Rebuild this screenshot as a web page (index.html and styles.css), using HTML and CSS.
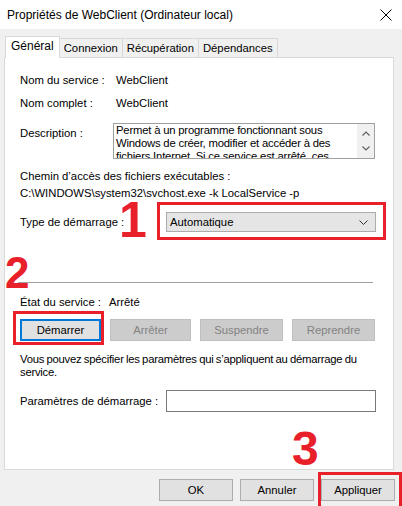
FILE: index.html
```html
<!DOCTYPE html>
<html lang="fr">
<head>
    <meta charset="UTF-8">
    <meta name="viewport" content="width=device-width, initial-scale=1.0">
    <title>Propriétés de WebClient</title>
    <link rel="stylesheet" href="styles.css">
</head>
<body>
    <div class="titlebar">
        <span class="title">Propriétés de WebClient (Ordinateur local)</span>
        <svg class="close" width="12" height="12" viewBox="0 0 12 12">
            <path d="M0.5 0.5 L11.5 11.5 M11.5 0.5 L0.5 11.5" stroke="#000" stroke-width="1"/>
        </svg>
    </div>

    <div class="tabs">
        <div class="tab active">Général</div>
        <div class="tab">Connexion</div>
        <div class="tab">Récupération</div>
        <div class="tab">Dépendances</div>
    </div>

    <div class="panel">
        <div class="row first">
            <span class="label">Nom du service :</span>
            <span>WebClient</span>
        </div>
        <div class="row second">
            <span class="label">Nom complet :</span>
            <span>WebClient</span>
        </div>
        <div class="row desc-row">
            <span class="label desc-label">Description :</span>
            <div class="textarea">
                <div class="desc-text">Permet à un programme fonctionnant sous Windows de créer, modifier et accéder à des fichiers Internet. Si ce service est arrêté, ces</div>
                <div class="scrollbar">
                    <svg width="8" height="5" viewBox="0 0 8 5"><path d="M0.5 4.5 L4 1 L7.5 4.5" fill="none" stroke="#606060" stroke-width="1.2"/></svg>
                    <svg width="8" height="5" viewBox="0 0 8 5"><path d="M0.5 0.5 L4 4 L7.5 0.5" fill="none" stroke="#606060" stroke-width="1.2"/></svg>
                </div>
            </div>
        </div>
        <div class="path-block">
            <div>Chemin d’accès des fichiers exécutables :</div>
            <div>C:\WINDOWS\system32\svchost.exe -k LocalService -p</div>
        </div>
        <div class="row startup-row">
            <span class="label wide">Type de démarrage :</span>
            <div class="select">
                <span>Automatique</span>
                <svg width="9" height="5" viewBox="0 0 9 5"><path d="M0.5 0.5 L4.5 4.5 L8.5 0.5" fill="none" stroke="#333" stroke-width="1"/></svg>
            </div>
        </div>

        <div class="separator"></div>

        <div class="row state-row">
            <span class="label">État du service :</span>
            <span>Arrêté</span>
        </div>
        <div class="service-buttons">
            <button class="btn focused">Démarrer</button>
            <button class="btn" disabled>Arrêter</button>
            <button class="btn" disabled>Suspendre</button>
            <button class="btn" disabled>Reprendre</button>
        </div>
        <p class="hint">Vous pouvez spécifier les paramètres qui s’appliquent au démarrage du service.</p>
        <div class="row params-row">
            <span class="label wide">Paramètres de démarrage :</span>
            <div class="input"></div>
        </div>
    </div>

    <div class="footer">
        <button class="btn">OK</button>
        <button class="btn">Annuler</button>
        <button class="btn">Appliquer</button>
    </div>

    <!-- red annotations drawn over the dialog -->
    <div class="mark box-1"></div>
    <div class="mark box-2"></div>
    <div class="mark box-3"></div>
    <span class="num num-1">1</span>
    <span class="num num-2">2</span>
    <span class="num num-3">3</span>
</body>
</html>
```

FILE: styles.css
```css
body {
    margin: 0;
    width: 402px;
    height: 506px;
    overflow: hidden;
    position: relative;
    background-color: #f0f0f0;
    font-family: "Liberation Sans", Arial, sans-serif;
    font-size: 11.3px;
    color: #000;
}

.titlebar {
    height: 29px;
    background-color: #fff;
    display: flex;
    align-items: center;
    justify-content: space-between;
    padding: 0 10px 0 7px;
}

.title {
    font-size: 12px;
}

.tabs {
    display: flex;
    align-items: flex-end;
    height: 28px;
    padding-left: 5px;
}

.tab {
    height: 18px;
    line-height: 19px;
    padding: 0 4px;
    border: 1px solid #d9d9d9;
    border-bottom: none;
    margin-left: -1px;
    background-color: #f0f0f0;
}

.tab:first-child {
    margin-left: 0;
}

.tab.active {
    height: 21px;
    line-height: 18px;
    background-color: #fff;
    position: relative;
    z-index: 1;
    margin-bottom: -1px;
    padding: 0 5px;
    font-size: 12px;
}

.panel {
    box-sizing: border-box;
    margin-left: 4px;
    width: 390px;
    height: 413px;
    background-color: #fff;
    border: 1px solid #d9d9d9;
    padding: 0 16px 0 15px;
}

.row {
    display: flex;
    align-items: center;
    height: 16px;
    white-space: nowrap;
}

.label {
    width: 96px;
    flex-shrink: 0;
}

.label.wide {
    width: 146px;
}

.first { margin-top: 14px; }
.second { margin-top: 7px; }

.desc-row {
    margin-top: 12px;
    height: 36px;
    align-items: flex-start;
}

.desc-label {
    width: 93px;
    padding-top: 4px;
}

.textarea {
    box-sizing: border-box;
    width: 262px;
    height: 36px;
    border: 1px solid #a0a0a0;
    display: flex;
    overflow: hidden;
    white-space: normal;
}

.desc-text {
    flex: 1;
    padding: 0 2px;
    line-height: 13px;
    height: 34px;
    overflow: hidden;
    letter-spacing: -0.2px;
}

.scrollbar {
    width: 17px;
    background-color: #f0f0f0;
    display: flex;
    flex-direction: column;
    align-items: center;
    justify-content: space-around;
    padding: 2px 0;
}

.path-block {
    margin-top: 9px;
    line-height: 17px;
}

.startup-row {
    margin-top: 10px;
    height: 20px;
}

.select {
    box-sizing: border-box;
    width: 210px;
    height: 20px;
    background-color: #e5e5e5;
    border: 1px solid #acacac;
    display: flex;
    align-items: center;
    justify-content: space-between;
    padding: 0 7px 0 3px;
}

.separator {
    margin: 50px 4px 0 -2px;
    height: 1px;
    background-color: #a0a0a0;
}

.state-row {
    margin-top: 11px;
}

.state-row .label {
    width: 89px;
}

.btn {
    box-sizing: border-box;
    height: 22px;
    width: 81px;
    font-family: inherit;
    font-size: 11.3px;
    color: #000;
    background-color: #e1e1e1;
    border: 1px solid #adadad;
    padding: 0;
}

.btn:disabled {
    background-color: #cccccc;
    border-color: #bfbfbf;
    color: #838383;
}

.btn.focused {
    border: 2px solid #0078d7;
}

.service-buttons {
    margin-top: 9px;
    display: flex;
    gap: 9px;
}

.service-buttons .btn:nth-child(3),
.service-buttons .btn:nth-child(4) {
    width: 83px;
}

.hint {
    margin: 12px -4px 0 0;
    line-height: 13px;
    letter-spacing: -0.25px;
    word-spacing: -0.5px;
}

.params-row {
    margin-top: 11px;
    height: 22px;
}

.input {
    box-sizing: border-box;
    width: 210px;
    height: 22px;
    border: 1px solid #7a7a7a;
    background-color: #fff;
}

.footer {
    display: flex;
    justify-content: flex-end;
    gap: 7px;
    padding: 9px 7px 0 0;
}

.footer .btn {
    width: 74px;
}

/* annotations */
.mark {
    position: absolute;
    border: 3px solid #e8202a;
    box-sizing: border-box;
}

.box-1 { left: 157px; top: 202px; width: 229px; height: 38px; }
.box-2 { left: 13px; top: 311px; width: 91px; height: 34px; }
.box-3 { left: 318px; top: 472px; width: 84px; height: 40px; }

.num {
    position: absolute;
    color: #e8202a;
    font-family: "Liberation Sans", Arial, sans-serif;
    font-weight: bold;
    font-size: 50px;
    line-height: 1;
}

.num-1 { left: 119px; top: 195px; }
.num-2 { left: 5px; top: 251px; font-size: 44px; }
.num-3 { left: 292px; top: 425px; font-size: 48px; }
```
